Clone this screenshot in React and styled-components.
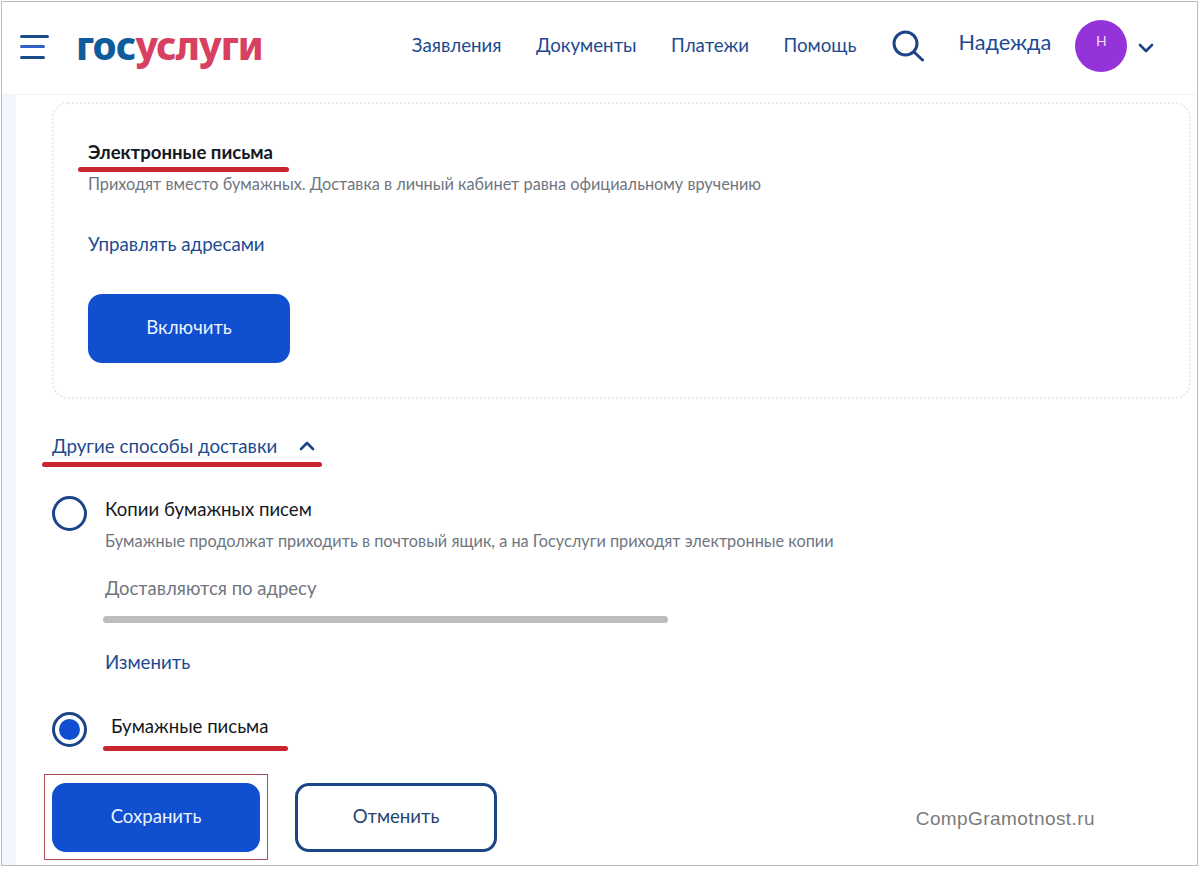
import styled, { createGlobalStyle } from 'styled-components'

const GlobalStyle = createGlobalStyle`
  html, body {
    margin: 0;
    background: #fff;
    font-family: Lato, "Noto Sans", sans-serif;
  }
`

const colors = {
  link: '#1d4a8f',
  navy: '#1c4587',
  blue: '#0f4fd0',
  text: '#14181f',
  muted: '#6f7680',
  red: '#c9252f',
}

const Frame = styled.div`
  position: relative;
  box-sizing: border-box;
  width: 1197px;
  height: 865px;
  margin: 1px 0 0 1px;
  border: 1px solid #bcbcbc;
  overflow: hidden;
`

const Header = styled.header`
  display: flex;
  align-items: center;
  height: 92px;
  padding-left: 18px;
  border-bottom: 1px solid #f1f2f4;
`

const Logo = styled.div`
  margin-left: 26px;
  font-family: "Noto Sans", sans-serif;
  font-size: 38.5px;
  font-weight: 800;
  letter-spacing: -0.9px;
  line-height: 1;
  margin-top: -6px;
  color: #d8405f;
  span {
    color: #0f5c9c;
  }
`

const Nav = styled.nav`
  display: flex;
  gap: 34.5px;
  margin-left: 149px;
  margin-top: -6px;
`

const NavLink = styled.a`
  font-size: 18.7px;
  color: ${colors.link};
`

const SearchButton = styled.div`
  display: flex;
  margin-left: 36px;
  margin-top: -5px;
`

const UserName = styled.div`
  margin-left: 34px;
  margin-top: -12px;
  font-size: 21.7px;
  color: ${colors.link};
`

const Avatar = styled.div`
  display: flex;
  justify-content: center;
  box-sizing: border-box;
  width: 52px;
  height: 52px;
  margin-left: 24px;
  margin-top: -4px;
  padding-top: 12px;
  border-radius: 50%;
  background: #9333d8;
  color: #f6d8f6;
  font-size: 14px;
`

const UserChevron = styled.div`
  display: flex;
  margin-left: 11px;
  margin-top: -1px;
`

const Body = styled.div`
  display: flex;
  height: 770px;
`

const Strip = styled.div`
  flex: none;
  width: 14px;
  background: #f1f5fc;
`

const Content = styled.main`
  flex: 1;
  padding: 7px 6px 0 36px;
`

const Card = styled.section`
  box-sizing: border-box;
  height: 297px;
  padding: 36px 34px 0;
  border: 2px dotted #e8eaed;
  border-radius: 16px;
`

const Title = styled.div`
  position: relative;
  width: fit-content;
  font-size: 18.6px;
  line-height: 24px;
  font-weight: ${(p) => (p.$bold ? 700 : 400)};
  color: ${colors.text};
`

const Hint = styled.div`
  margin-top: 10px;
  font-size: 16.3px;
  line-height: 20px;
  color: ${colors.muted};
`

const TextLink = styled.a`
  display: block;
  font-size: 18.7px;
  line-height: 24px;
  color: ${colors.link};
`

const CardLink = styled(TextLink)`
  margin-top: 38px;
`

const Button = styled.button`
  box-sizing: border-box;
  width: ${(p) => p.$width}px;
  height: 69px;
  padding: 0 0 4px;
  border-radius: 14px;
  border: 3px solid ${(p) => (p.$outline ? colors.navy : colors.blue)};
  background: ${(p) => (p.$outline ? '#fff' : colors.blue)};
  color: ${(p) => (p.$outline ? '#25456f' : '#eaf3ff')};
  font-family: inherit;
  font-size: 18.6px;
`

const CardButton = styled(Button)`
  display: block;
  margin-top: 38px;
`

const Toggle = styled.div`
  position: relative;
  display: flex;
  align-items: center;
  gap: 22px;
  margin-top: 35px;
  font-size: 18.7px;
  line-height: 24px;
  color: ${colors.link};
`

const Option = styled.div`
  display: flex;
  gap: 18px;
  margin-top: ${(p) => p.$top}px;
`

const Radio = styled.div`
  flex: none;
  box-sizing: border-box;
  display: flex;
  align-items: center;
  justify-content: center;
  width: 35px;
  height: 35px;
  border: 3.5px solid ${colors.navy};
  border-radius: 50%;
  &::after {
    content: '';
    display: ${(p) => (p.$checked ? 'block' : 'none')};
    width: 21px;
    height: 21px;
    border-radius: 50%;
    background: ${colors.blue};
  }
`

const OptionBody = styled.div`
  flex: 1;
  padding-top: 1px;
`

const AddressLabel = styled.div`
  margin-top: 25px;
  font-size: 18.5px;
  line-height: 24px;
  color: ${colors.muted};
`

const Redacted = styled.div`
  width: 565px;
  height: 7px;
  margin: 16px 0 0 -2px;
  border-radius: 4px;
  background: #bdbdbd;
`

const OptionLink = styled(TextLink)`
  margin-top: 27px;
`

const PaperTitle = styled(Title)`
  margin: 2px 0 0 6px;
  height: 24px;
`

const Actions = styled.div`
  position: relative;
  display: flex;
  align-items: center;
  gap: 35px;
  margin-top: 36px;
`

const SaveMark = styled.div`
  position: absolute;
  left: -8px;
  top: -9px;
  width: 224px;
  height: 86px;
  box-sizing: border-box;
  border: 1px solid #a9505a;
`

const Underline = styled.i`
  position: absolute;
  left: ${(p) => p.$left}px;
  top: ${(p) => p.$top}px;
  width: ${(p) => p.$width}px;
  height: 5px;
  border-radius: 2.5px;
  background: ${colors.red};
`

const Watermark = styled.div`
  position: absolute;
  right: 102px;
  bottom: 35px;
  font-family: "Liberation Sans", Arial, sans-serif;
  font-size: 19px;
  letter-spacing: 0.42px;
  color: #7b7b7b;
`

function MenuIcon() {
  return (
    <svg width="30" height="26" viewBox="0 0 30 26">
      <rect x="0" y="0" width="29" height="3" rx="1.5" fill="#1a4a8c" />
      <rect x="0" y="10" width="25" height="3" rx="1.5" fill="#2f5fc4" />
      <rect x="0" y="21" width="25" height="3" rx="1.5" fill="#1a4a8c" />
    </svg>
  )
}

function SearchIcon() {
  return (
    <svg width="32" height="32" viewBox="0 0 32 32" fill="none" stroke={colors.navy} strokeWidth="3" strokeLinecap="round">
      <circle cx="13.5" cy="13.5" r="11.5" />
      <path d="M22 22l8.5 8" />
    </svg>
  )
}

function Chevron({ up }) {
  return (
    <svg width="16" height="10" viewBox="0 0 16 10" fill="none" stroke={colors.navy} strokeWidth="2.6" strokeLinecap="round" strokeLinejoin="round">
      <path d={up ? 'M2 8l6-6 6 6' : 'M2 2l6 6 6-6'} />
    </svg>
  )
}

export default function App() {
  return (
    <Frame>
      <GlobalStyle />
      <Header>
        <MenuIcon />
        <Logo>
          <span>гос</span>услуги
        </Logo>
        <Nav>
          <NavLink>Заявления</NavLink>
          <NavLink>Документы</NavLink>
          <NavLink>Платежи</NavLink>
          <NavLink>Помощь</NavLink>
        </Nav>
        <SearchButton>
          <SearchIcon />
        </SearchButton>
        <UserName>Надежда</UserName>
        <Avatar>Н</Avatar>
        <UserChevron>
          <Chevron />
        </UserChevron>
      </Header>
      <Body>
        <Strip />
        <Content>
          <Card>
            <Title $bold>
              Электронные письма
              <Underline $left={-10} $top={27} $width={211} />
            </Title>
            <Hint>Приходят вместо бумажных. Доставка в личный кабинет равна официальному вручению</Hint>
            <CardLink>Управлять адресами</CardLink>
            <CardButton $width={202}>Включить</CardButton>
          </Card>
          <Toggle>
            Другие способы доставки
            <Chevron up />
            <Underline $left={-10} $top={28} $width={280} />
          </Toggle>
          <Option $top={38}>
            <Radio />
            <OptionBody>
              <Title>Копии бумажных писем</Title>
              <Hint>Бумажные продолжат приходить в почтовый ящик, а на Госуслуги приходят электронные копии</Hint>
              <AddressLabel>Доставляются по адресу</AddressLabel>
              <Redacted />
              <OptionLink>Изменить</OptionLink>
            </OptionBody>
          </Option>
          <Option $top={38}>
            <Radio $checked />
            <PaperTitle>
              Бумажные письма
              <Underline $left={-8} $top={32} $width={185} />
            </PaperTitle>
          </Option>
          <Actions>
            <SaveMark />
            <Button $width={208}>Сохранить</Button>
            <Button $width={202} $outline>Отменить</Button>
          </Actions>
        </Content>
      </Body>
      <Watermark>CompGramotnost.ru</Watermark>
    </Frame>
  )
}
